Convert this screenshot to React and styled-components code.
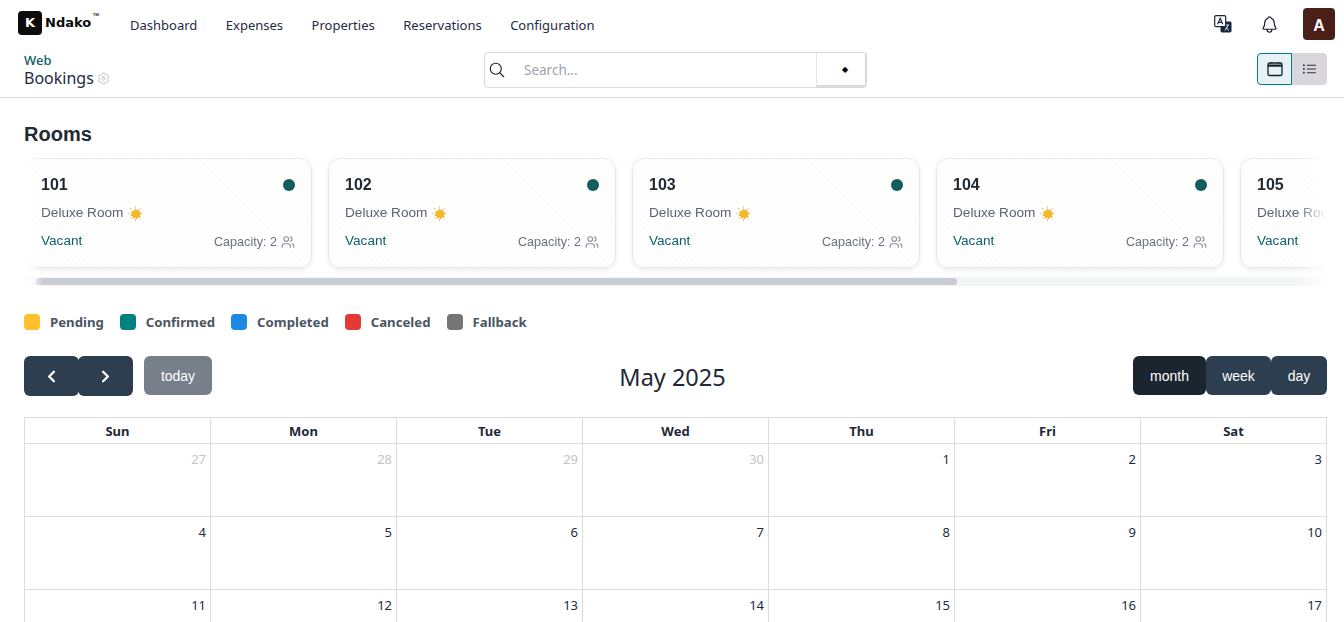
import styled, { createGlobalStyle } from "styled-components";
import {
  IoSearchOutline,
  IoSettingsOutline,
  IoNotificationsOutline,
  IoChevronBack,
  IoChevronForward,
} from "react-icons/io5";
import { LuUsers } from "react-icons/lu";
import { BsListUl } from "react-icons/bs";

const GlobalStyle = createGlobalStyle`
  html, body {
    margin: 0;
    height: 622px;
    overflow: hidden;
    background: #ffffff;
    font-family: "Noto Sans", sans-serif;
    color: #1f2937;
  }
  * { box-sizing: border-box; }
`;

const navLinks = ["Dashboard", "Expenses", "Properties", "Reservations", "Configuration"];
const rooms = ["101", "102", "103", "104", "105"];
const legend = [
  { label: "Pending", color: "#fdc02f" },
  { label: "Confirmed", color: "#008080" },
  { label: "Completed", color: "#1e88e5" },
  { label: "Canceled", color: "#e53935" },
  { label: "Fallback", color: "#757575" },
];
const weekdays = ["Sun", "Mon", "Tue", "Wed", "Thu", "Fri", "Sat"];
const days = [
  27, 28, 29, 30, 1, 2, 3,
  4, 5, 6, 7, 8, 9, 10,
  11, 12, 13, 14, 15, 16, 17,
];

function SunIcon() {
  return (
    <svg width="15" height="15" viewBox="0 0 16 16">
      <path
        d="M8 2.4l1.5 2 2.4-.7.1 2.5 2.3 1-1.5 2 .6 2.4-2.5.3-1.3 2.1-2-1.4-2.3.9-.5-2.4-2.2-1.2 1.4-2-.4-2.5 2.5-.2z"
        fill="#f2b92c"
      />
      <path d="M8 .4v1.4M8 14.2v1.4M.4 8h1.4M14.2 8h1.4M2.6 2.6l.9.9M12.5 12.5l.9.9M13.4 2.6l-.9.9M3.5 12.5l-.9.9" stroke="#f2b92c" strokeWidth="1.1" />
    </svg>
  );
}

function TranslateIcon() {
  return (
    <svg width="18" height="18" viewBox="0 0 18 18">
      <rect x="6.5" y="6.5" width="11" height="11" rx="1.4" fill="#14263f" />
      <path d="M10.5 10h4.5M14.4 10l-3.4 5.4M11.6 12.2l3.4 3.2" stroke="#fff" strokeWidth="0.9" fill="none" />
      <rect x="0.7" y="0.7" width="11" height="11" rx="1.4" fill="#fff" stroke="#14263f" strokeWidth="1.2" />
      <path d="M3.6 9.2L6.2 3.2l2.6 6M4.5 7.4h3.4" stroke="#14263f" strokeWidth="1.1" fill="none" />
    </svg>
  );
}

function CalendarIcon() {
  return (
    <svg width="16" height="16" viewBox="0 0 16 16" fill="none">
      <rect x="1" y="2" width="14" height="12.5" rx="1.6" stroke="#14202c" strokeWidth="1.3" />
      <path d="M1 4.6h14" stroke="#14202c" strokeWidth="2.2" />
      <path d="M4.5 1v1.5M11.5 1v1.5" stroke="#14202c" strokeWidth="1.2" />
    </svg>
  );
}

function RoomCard({ number }) {
  return (
    <Card>
      <CardTop>
        <RoomNumber>{number}</RoomNumber>
        <StatusDot />
      </CardTop>
      <RoomType>
        Deluxe Room <SunIcon />
      </RoomType>
      <CardBottom>
        <Vacant>Vacant</Vacant>
        <Capacity>
          Capacity: 2 <GuestsIcon />
        </Capacity>
      </CardBottom>
    </Card>
  );
}

function App() {
  return (
    <>
      <GlobalStyle />
      <Header>
        <TopBar>
          <Logo>
            <LogoMark>K</LogoMark>
            <LogoText>Ndako</LogoText>
            <LogoTm>TM</LogoTm>
          </Logo>
          <Nav>
            {navLinks.map((link) => (
              <NavLink key={link}>{link}</NavLink>
            ))}
          </Nav>
          <TopActions>
            <TranslateIcon />
            <BellIcon />
            <Avatar>A</Avatar>
          </TopActions>
        </TopBar>
        <SubBar>
          <Crumbs>
            <CrumbApp>Web</CrumbApp>
            <CrumbTitle>
              Bookings <GearIcon />
            </CrumbTitle>
          </Crumbs>
          <SearchBox>
            <SearchIcon />
            <SearchInput placeholder="Search..." readOnly />
            <SearchButton>◆</SearchButton>
          </SearchBox>
          <ViewToggle>
            <ViewButton $active>
              <CalendarIcon />
            </ViewButton>
            <ViewButton>
              <ListIcon />
            </ViewButton>
          </ViewToggle>
        </SubBar>
      </Header>
      <Main>
        <RoomsTitle>Rooms</RoomsTitle>
        <RoomsWrap>
          <RoomsRow>
            {rooms.map((room) => (
              <RoomCard key={room} number={room} />
            ))}
          </RoomsRow>
          <ScrollTrack>
            <ScrollThumb $share={72} />
          </ScrollTrack>
        </RoomsWrap>
        <Legend>
          {legend.map((item) => (
            <LegendItem key={item.label}>
              <Swatch $color={item.color} />
              {item.label}
            </LegendItem>
          ))}
        </Legend>
        <CalendarToolbar>
          <ToolbarGroup>
            <ButtonPair>
              <ArrowButton>
                <IoChevronBack />
              </ArrowButton>
              <ArrowButton>
                <IoChevronForward />
              </ArrowButton>
            </ButtonPair>
            <TodayButton>today</TodayButton>
          </ToolbarGroup>
          <MonthTitle>May 2025</MonthTitle>
          <ButtonPair>
            <RangeButton $active $width={73}>month</RangeButton>
            <RangeButton $width={65}>week</RangeButton>
            <RangeButton $width={56}>day</RangeButton>
          </ButtonPair>
        </CalendarToolbar>
        <CalendarGrid>
          {weekdays.map((day) => (
            <DayHead key={day}>{day}</DayHead>
          ))}
          {days.map((day, i) => (
            <DayCell key={i} $muted={i < 4}>
              {day}
            </DayCell>
          ))}
        </CalendarGrid>
      </Main>
    </>
  );
}

export default App;

const Header = styled.header`
  height: 98px;
  border-bottom: 1px solid #dcdcdc;
  padding: 0 9px 0 24px;
`;

const TopBar = styled.div`
  height: 50px;
  display: flex;
  align-items: center;
`;

const Logo = styled.div`
  position: relative;
  display: flex;
  align-items: center;
  gap: 3px;
  width: 112px;
  margin-left: -6px;
  margin-top: -5px;
`;

const LogoMark = styled.span`
  width: 24px;
  height: 24px;
  background: #0c0c0c;
  border-radius: 4px;
  color: #ffffff;
  display: flex;
  align-items: center;
  justify-content: center;
  font-family: "DejaVu Sans", sans-serif;
  font-weight: 700;
  font-size: 13px;
`;

const LogoText = styled.span`
  font-family: "DejaVu Sans", sans-serif;
  font-weight: 700;
  font-size: 13px;
  color: #0c0c0c;
`;

const LogoTm = styled.span`
  position: absolute;
  left: 75px;
  top: 1px;
  font-size: 4px;
  font-weight: 700;
  color: #333333;
`;

const Nav = styled.nav`
  display: flex;
  gap: 28.5px;
`;

const NavLink = styled.a`
  font-size: 13px;
  color: #1f2a44;
`;

const TopActions = styled.div`
  margin-left: auto;
  display: flex;
  align-items: center;
  gap: 28px;
  margin-top: -2px;
`;

const BellIcon = styled(IoNotificationsOutline)`
  font-size: 19px;
  color: #14202c;
`;

const Avatar = styled.div`
  width: 32px;
  height: 32px;
  margin-left: -4px;
  padding-top: 3px;
  border-radius: 4px;
  background: #4a1f18;
  color: #ffffff;
  font-family: "Liberation Sans", sans-serif;
  font-weight: 700;
  font-size: 16px;
  display: flex;
  align-items: center;
  justify-content: center;
`;

const SubBar = styled.div`
  display: grid;
  grid-template-columns: 1fr 383px 1fr;
  align-items: start;
  height: 47px;
  padding-right: 8px;
`;

const Crumbs = styled.div`
  display: flex;
  flex-direction: column;
  margin-top: 2px;
`;

const CrumbApp = styled.span`
  font-size: 13px;
  font-weight: 500;
  line-height: 16px;
  color: #0f5f66;
`;

const CrumbTitle = styled.span`
  font-size: 16px;
  line-height: 20px;
  color: #1f2a44;
  display: flex;
  align-items: center;
  gap: 3px;
`;

const GearIcon = styled(IoSettingsOutline)`
  font-size: 13px;
  color: #b5b5b5;
`;

const SearchBox = styled.div`
  height: 36px;
  margin-top: 2px;
  display: flex;
  align-items: center;
  border: 1px solid #d8d8de;
  border-radius: 4px;
`;

const SearchIcon = styled(IoSearchOutline)`
  font-size: 18px;
  margin-left: 3px;
  color: #14202c;
  flex: none;
`;

const SearchInput = styled.input`
  flex: 1;
  min-width: 0;
  margin-left: 18px;
  padding: 0;
  border: 0;
  outline: 0;
  font: inherit;
  font-size: 13.5px;
  &::placeholder {
    color: #9ca3af;
  }
`;

const SearchButton = styled.div`
  width: 50px;
  height: 34px;
  flex: none;
  padding: 0 0 2px 7px;
  display: flex;
  align-items: center;
  justify-content: center;
  font-size: 8px;
  color: #000000;
  border-left: 1px solid #e4e4e8;
  border-bottom: 2px solid #d8d8de;
  border-right: 1px solid #d8d8de;
`;

const ViewToggle = styled.div`
  justify-self: end;
  display: flex;
  margin-top: 3px;
`;

const ViewButton = styled.div`
  width: 35px;
  height: 32px;
  display: flex;
  align-items: center;
  justify-content: center;
  border-radius: ${(p) => (p.$active ? "4px 0 0 4px" : "0 4px 4px 0")};
  background: ${(p) => (p.$active ? "#e6f2f3" : "#d9d7dc")};
  border: ${(p) => (p.$active ? "1px solid #017e84" : "0")};
`;

const ListIcon = styled(BsListUl)`
  font-size: 15px;
  color: #2b3440;
`;

const Main = styled.main`
  padding: 22px 17px 0 24px;
`;

const RoomsTitle = styled.h2`
  margin: 0;
  font-family: "Liberation Sans", sans-serif;
  font-weight: 700;
  font-size: 20px;
  line-height: 28px;
  color: #1f2937;
`;

const RoomsWrap = styled.div`
  margin-top: 10px;
  height: 130px;
  -webkit-mask-image: linear-gradient(to right, transparent 0, #000 20px, #000 calc(100% - 30px), transparent 100%);
  mask-image: linear-gradient(to right, transparent 0, #000 20px, #000 calc(100% - 30px), transparent 100%);
`;

const RoomsRow = styled.div`
  display: flex;
  gap: 16px;
  height: 118px;
  overflow: hidden;
`;

const ScrollTrack = styled.div`
  margin-top: 1px;
  height: 9px;
  padding: 1px 12px;
  border-radius: 4px;
  background: #f3f4f6;
`;

const ScrollThumb = styled.div`
  width: ${(p) => p.$share}%;
  height: 7px;
  border-radius: 4px;
  background: #c9ccd3;
`;

const Card = styled.div`
  flex: none;
  width: 288px;
  height: 110px;
  padding: 16px;
  border: 1px solid #e5e7eb;
  border-radius: 12px;
  background: repeating-linear-gradient(45deg, #ffffff 0 2px, #fcfcfc 2px 4px);
  box-shadow: 0 2px 5px rgba(0, 0, 0, 0.08);
  font-family: "Liberation Sans", sans-serif;
`;

const CardTop = styled.div`
  display: flex;
  justify-content: space-between;
  align-items: center;
  height: 20px;
`;

const RoomNumber = styled.span`
  font-weight: 700;
  font-size: 16px;
  color: #1f2937;
`;

const StatusDot = styled.span`
  width: 12px;
  height: 12px;
  border-radius: 50%;
  background: #0f5f5f;
`;

const RoomType = styled.div`
  margin-top: 8px;
  display: flex;
  align-items: center;
  gap: 5px;
  font-size: 13.6px;
  line-height: 20px;
  color: #5b6472;
`;

const CardBottom = styled.div`
  margin-top: 8px;
  display: flex;
  justify-content: space-between;
  align-items: center;
`;

const Vacant = styled.span`
  font-size: 13.6px;
  color: #0f5f66;
`;

const Capacity = styled.span`
  margin-top: 4px;
  display: flex;
  align-items: center;
  gap: 4px;
  font-size: 12.6px;
  color: #6b7280;
`;

const GuestsIcon = styled(LuUsers)`
  font-size: 14px;
  color: #8b929c;
`;

const Legend = styled.div`
  margin-top: 25px;
  display: flex;
  gap: 16px;
`;

const LegendItem = styled.div`
  display: flex;
  align-items: center;
  gap: 10px;
  font-size: 13.2px;
  font-weight: 700;
  line-height: 18px;
  color: #4b5563;
`;

const Swatch = styled.span`
  width: 16px;
  height: 16px;
  border-radius: 4px;
  background: ${(p) => p.$color};
`;

const CalendarToolbar = styled.div`
  margin-top: 25px;
  height: 40px;
  display: flex;
  justify-content: space-between;
  align-items: flex-start;
`;

const ToolbarGroup = styled.div`
  display: flex;
  align-items: flex-start;
  gap: 11px;
`;

const ButtonPair = styled.div`
  display: flex;
`;

const ArrowButton = styled.button`
  width: 55px;
  height: 40px;
  border: 0;
  border-radius: 6px;
  background: #2c3e50;
  color: #ffffff;
  font-size: 17px;
  display: flex;
  align-items: center;
  justify-content: center;
  padding: 0;
  & + & {
    margin-left: -1px;
  }
  svg path {
    stroke-width: 70;
  }
`;

const TodayButton = styled.button`
  width: 68px;
  height: 39px;
  border: 0;
  border-radius: 6px;
  background: #777f8b;
  color: #ffffff;
  font-family: "Liberation Sans", sans-serif;
  font-size: 14px;
  padding: 0;
`;

const RangeButton = styled.button`
  width: ${(p) => p.$width}px;
  height: 39px;
  border: 0;
  border-radius: 6px;
  background: ${(p) => (p.$active ? "#1a252f" : "#2c3e50")};
  color: #ffffff;
  font-family: "Liberation Sans", sans-serif;
  font-size: 14px;
  padding: 0;
`;

const MonthTitle = styled.h2`
  margin: 0;
  font-weight: 400;
  font-size: 23.5px;
  line-height: 42px;
  color: #1f2937;
`;

const CalendarGrid = styled.div`
  margin-top: 21px;
  display: grid;
  grid-template-columns: repeat(7, 186px);
  grid-auto-rows: 73px;
  grid-template-rows: 26px;
  border-top: 1px solid #dddddd;
  border-left: 1px solid #dddddd;
`;

const DayHead = styled.div`
  border-right: 1px solid #dddddd;
  border-bottom: 1px solid #dddddd;
  text-align: center;
  font-size: 13px;
  font-weight: 700;
  line-height: 26px;
  color: #1f2937;
`;

const DayCell = styled.div`
  border-right: 1px solid #dddddd;
  border-bottom: 1px solid #dddddd;
  padding: 6px 4px;
  text-align: right;
  font-size: 13px;
  line-height: 18px;
  color: ${(p) => (p.$muted ? "#c4c4c4" : "#1f2a44")};
`;
